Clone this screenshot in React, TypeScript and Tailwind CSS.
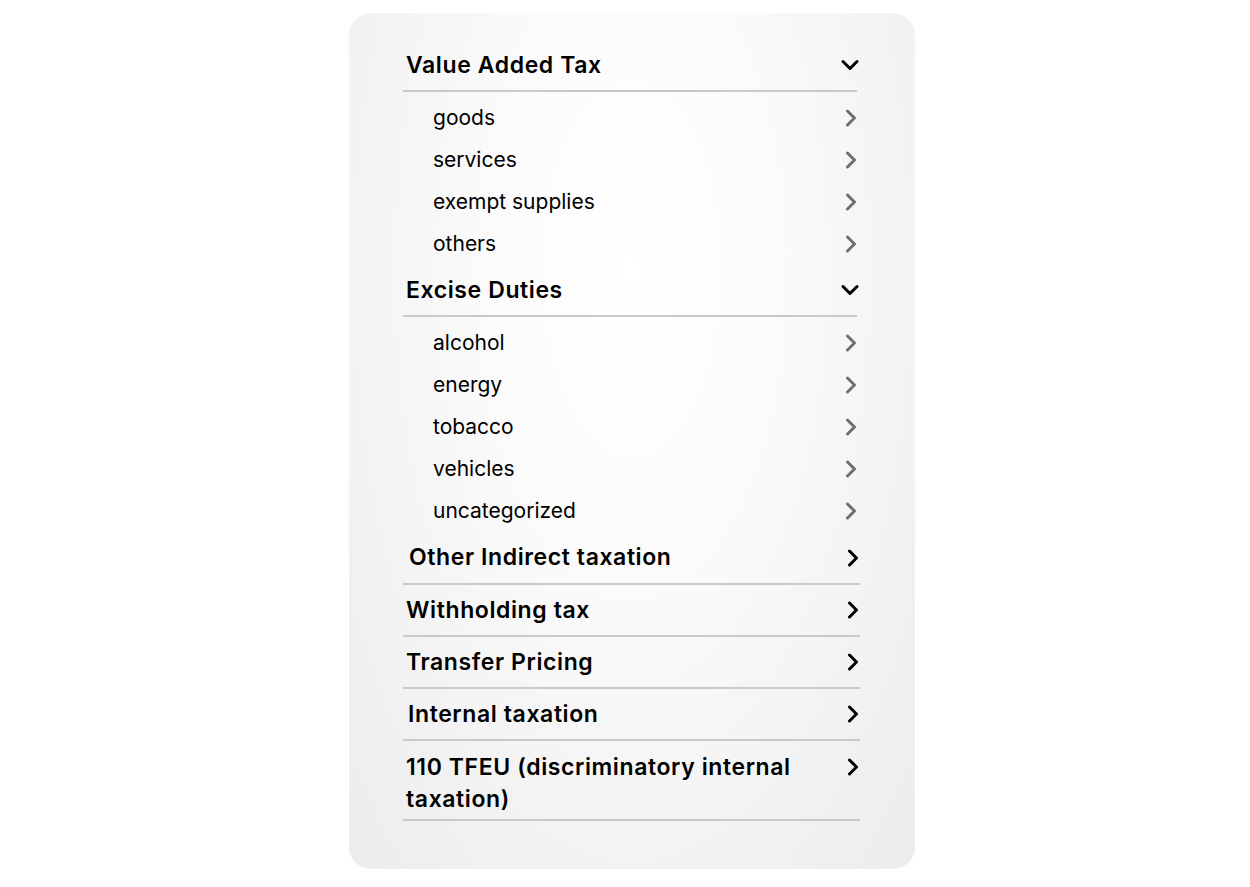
import React from 'react';

const groups = [
  { title: 'Value Added Tax', items: ['goods', 'services', 'exempt supplies', 'others'] },
  { title: 'Excise Duties', items: ['alcohol', 'energy', 'tobacco', 'vehicles', 'uncategorized'] },
];

const links = [
  { title: 'Other Indirect taxation', indent: 'pl-[6px]' },
  { title: 'Withholding tax', indent: 'pl-[3px]' },
  { title: 'Transfer Pricing', indent: 'pl-[3px]' },
  { title: 'Internal taxation', indent: 'pl-[5px]' },
];

function ChevronDown() {
  return (
    <svg width="18" height="12" viewBox="0 0 18 12" className="mr-[-4px]">
      <polyline points="2,2.5 9,9.5 16,2.5" fill="none" stroke="#000" strokeWidth="3" strokeLinecap="round" strokeLinejoin="round" />
    </svg>
  );
}

function ChevronRight({ color = '#000' }: { color?: string }) {
  return (
    <svg width="12" height="18" viewBox="0 0 12 18">
      <polyline points="2.5,2 9.5,9 2.5,16" fill="none" stroke={color} strokeWidth="3" strokeLinecap="round" strokeLinejoin="round" />
    </svg>
  );
}

export default function App() {
  return (
    <div className="min-h-screen w-full bg-white flex justify-start pl-[349px] pt-[13px]" style={{ fontFamily: 'Inter, "Noto Sans", sans-serif' }}>
      <div className="w-[566px] h-[856px] rounded-[22px] pl-[54px] pr-[55px] pt-[27px] bg-[radial-gradient(ellipse_at_50%_30%,#ffffff_0%,#fbfbfb_35%,#ececec_100%)]">
        <div className="mr-[3px]">
          {groups.map((g) => (
            <div key={g.title}>
              <div className="h-[52px] flex items-center justify-between border-b-2 border-[#c9c9c9] pl-[3px] pr-[2px]">
                <span className="text-[23px] font-semibold text-black tracking-[0.6px]">{g.title}</span>
                <ChevronDown />
              </div>
              <div className="pt-[5px]">
                {g.items.map((it) => (
                  <div key={it} className="h-[42px] flex items-center justify-between pl-[30px]">
                    <span className="text-[21px] text-black">{it}</span>
                    <ChevronRight color="#6f6f6f" />
                  </div>
                ))}
              </div>
            </div>
          ))}
        </div>
        <div>
          {links.map((l, i) => (
            <div key={l.title} className={`${i === 0 ? 'h-[53px]' : 'h-[52px]'} flex items-center justify-between border-b-2 border-[#c9c9c9] ${l.indent} pr-[1px]`}>
              <span className="text-[23px] font-semibold text-black tracking-[0.6px]">{l.title}</span>
              <ChevronRight />
            </div>
          ))}
          <div className="flex items-start justify-between border-b-2 border-[#c9c9c9] pl-[3px] pr-[1px] pt-[10px] pb-[4px]">
            <span className="text-[23px] leading-[32px] font-semibold text-black tracking-[0.6px] w-[410px]">
              110 TFEU (discriminatory internal taxation)
            </span>
            <div className="h-[32px] flex items-center">
              <ChevronRight />
            </div>
          </div>
        </div>
      </div>
    </div>
  );
}
